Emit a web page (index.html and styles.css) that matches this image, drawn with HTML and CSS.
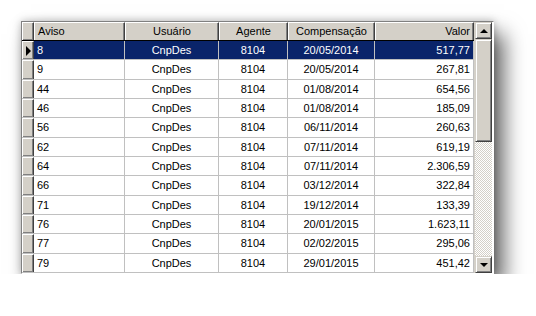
FILE: index.html
```html
<!DOCTYPE html>
<html>
<head>
<meta charset="utf-8">
<link rel="stylesheet" href="styles.css">
</head>
<body>
<div class="frame">
  <div class="grid">
    <div class="row head">
      <div class="ind"></div>
      <div class="c l">Aviso</div>
      <div class="c">Usuário</div>
      <div class="c">Agente</div>
      <div class="c">Compensação</div>
      <div class="c r">Valor</div>
    </div>
    <div class="row sel"><div class="ind"><span class="tri"></span></div><div class="c l">8</div><div class="c">CnpDes</div><div class="c">8104</div><div class="c">20/05/2014</div><div class="c r">517,77</div></div>
    <div class="row"><div class="ind"></div><div class="c l">9</div><div class="c">CnpDes</div><div class="c">8104</div><div class="c">20/05/2014</div><div class="c r">267,81</div></div>
    <div class="row"><div class="ind"></div><div class="c l">44</div><div class="c">CnpDes</div><div class="c">8104</div><div class="c">01/08/2014</div><div class="c r">654,56</div></div>
    <div class="row"><div class="ind"></div><div class="c l">46</div><div class="c">CnpDes</div><div class="c">8104</div><div class="c">01/08/2014</div><div class="c r">185,09</div></div>
    <div class="row"><div class="ind"></div><div class="c l">56</div><div class="c">CnpDes</div><div class="c">8104</div><div class="c">06/11/2014</div><div class="c r">260,63</div></div>
    <div class="row"><div class="ind"></div><div class="c l">62</div><div class="c">CnpDes</div><div class="c">8104</div><div class="c">07/11/2014</div><div class="c r">619,19</div></div>
    <div class="row"><div class="ind"></div><div class="c l">64</div><div class="c">CnpDes</div><div class="c">8104</div><div class="c">07/11/2014</div><div class="c r">2.306,59</div></div>
    <div class="row"><div class="ind"></div><div class="c l">66</div><div class="c">CnpDes</div><div class="c">8104</div><div class="c">03/12/2014</div><div class="c r">322,84</div></div>
    <div class="row"><div class="ind"></div><div class="c l">71</div><div class="c">CnpDes</div><div class="c">8104</div><div class="c">19/12/2014</div><div class="c r">133,39</div></div>
    <div class="row"><div class="ind"></div><div class="c l">76</div><div class="c">CnpDes</div><div class="c">8104</div><div class="c">20/01/2015</div><div class="c r">1.623,11</div></div>
    <div class="row"><div class="ind"></div><div class="c l">77</div><div class="c">CnpDes</div><div class="c">8104</div><div class="c">02/02/2015</div><div class="c r">295,06</div></div>
    <div class="row"><div class="ind"></div><div class="c l">79</div><div class="c">CnpDes</div><div class="c">8104</div><div class="c">29/01/2015</div><div class="c r">451,42</div></div>
  </div>
  <div class="scroll">
    <div class="btn"><span class="up"></span></div>
    <div class="thumb"></div>
    <div class="track"></div>
    <div class="btn"><span class="down"></span></div>
  </div>
</div>
</body>
</html>
```
FILE: styles.css
```css
html, body { margin: 0; padding: 0; background: #fff; }
body { padding: 21px 0 0 21px; font-family: "Liberation Sans", Arial, sans-serif; font-size: 11px; color: #000; }
.frame {
  display: flex;
  width: 471px;
  height: 251px;
  border-top: 1px solid #808080;
  border-left: 1px solid #808080;
  border-right: 1px solid #fff;
  border-bottom: 1px solid #fff;
  background: #fff;
  box-shadow: 10px 13px 20px rgba(0,0,0,0.6), 0 0 8px rgba(0,0,0,0.25);
  box-sizing: content-box;
}
.grid { width: 452px; display: flex; flex-direction: column; overflow: hidden; }
.row {
  display: grid;
  grid-template-columns: 12px 91px 94px 69px 87px 99px;
  height: 19.34px;
  flex: none;
  box-sizing: border-box;
  border-bottom: 1px solid #c0c0c0;
}
.c {
  text-align: center;
  line-height: 18px;
  border-right: 1px solid #c0c0c0;
  padding: 0 3px;
  white-space: nowrap;
  overflow: hidden;
}
.c.l { text-align: left; }
.c.r { text-align: right; }
.ind {
  background: #d4d0c8;
  border-top: 1px solid #fff;
  border-left: 1px solid #fff;
  border-right: 1px solid #404040;
  box-shadow: inset -1px -1px 0 #808080;
  display: flex; align-items: center; justify-content: center;
}
.row.head { height: 19px; border-bottom: 1px solid #000; }
.head .c {
  background: #d4d0c8;
  border-top: 1px solid #fff;
  border-left: 1px solid #fff;
  border-right: 1px solid #404040;
  box-shadow: inset -1px 0 0 #808080;
  line-height: 17px;
}
.head .ind { border-right: 1px solid #404040; }
.row.sel .c { background: #0a246a; color: #fff; }
.tri {
  width: 0; height: 0;
  border-top: 5px solid transparent;
  border-bottom: 5px solid transparent;
  border-left: 5px solid #000;
  margin-left: 1px;
}
.scroll {
  width: 17px;
  display: flex; flex-direction: column;
  border-left: 1px solid #d4d0c8;
}
.btn {
  width: 17px; height: 17px; box-sizing: border-box;
  background: #d4d0c8;
  border-top: 1px solid #d4d0c8; border-left: 1px solid #d4d0c8;
  border-right: 1px solid #404040; border-bottom: 1px solid #404040;
  box-shadow: inset 1px 1px 0 #fff, inset -1px -1px 0 #808080;
  display: flex; align-items: center; justify-content: center;
}
.up { width: 0; height: 0; border-left: 4px solid transparent; border-right: 4px solid transparent; border-bottom: 4px solid #000; }
.down { width: 0; height: 0; border-left: 4px solid transparent; border-right: 4px solid transparent; border-top: 4px solid #000; margin-top: 1px; }
.thumb {
  height: 103px; box-sizing: border-box;
  background: #d4d0c8;
  border-top: 1px solid #d4d0c8; border-left: 1px solid #d4d0c8;
  border-right: 1px solid #404040; border-bottom: 1px solid #404040;
  box-shadow: inset 1px 1px 0 #fff, inset -1px -1px 0 #808080;
}
.track {
  flex: 1;
  background-color: #fff;
  background-image: repeating-conic-gradient(#d4d0c8 0 25%, #fff 0 50%);
  background-size: 2px 2px;
}
```
